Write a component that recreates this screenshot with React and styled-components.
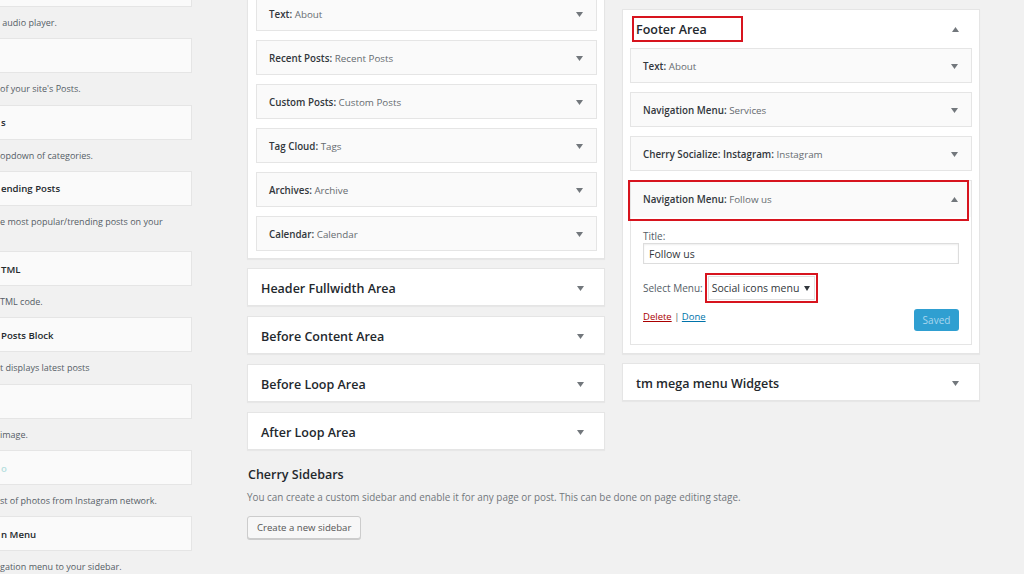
import React from "react";
import styled, { createGlobalStyle } from "styled-components";

const Global = createGlobalStyle`
  html, body { margin: 0; padding: 0; background: #f1f1f1; }
  body { font-family: "Open Sans", "Noto Sans", sans-serif; color: #23282d; overflow: hidden; width: 1024px; height: 574px; }
`;

const Page = styled.div`
  display: flex;
  align-items: flex-start;
  width: 1024px;
  height: 574px;
  overflow: hidden;
`;

const LeftCol = styled.div`
  flex: none;
  width: 200px;
  min-width: 0;
  margin-left: -8px;
  margin-top: -28px;
  display: flex;
  flex-direction: column;
`;

const AvailCard = styled.div`
  height: 35px;
  box-sizing: border-box;
  background: #fafafa;
  border: 1px solid #e5e5e5;
  display: flex;
  align-items: center;
  padding: 1px 0 0 8px;
  font-size: 9.6px;
  font-weight: 600;
  color: ${(p) => (p.$teal ? "#b5dede" : "#23282d")};
  white-space: nowrap;
  overflow: hidden;
`;

const AvailDesc = styled.div`
  margin: 9px 0 8.3px;
  padding-left: 8px;
  font-size: 9px;
  line-height: 14px;
  min-height: ${(p) => (p.$lines || 1) * 14}px;
  color: #555d66;
  white-space: nowrap;
`;

const MidCol = styled.div`
  flex: none;
  width: 358px;
  min-width: 0;
  margin-left: 55px;
  margin-top: -13px;
  display: flex;
  flex-direction: column;
`;

const RightCol = styled.div`
  flex: none;
  width: 358px;
  min-width: 0;
  margin-left: 17px;
  margin-top: 9px;
  display: flex;
  flex-direction: column;
  gap: 9px;
`;

const Panel = styled.div`
  background: #fff;
  border: 1px solid #e5e5e5;
  box-shadow: 0 1px 1px rgba(0, 0, 0, 0.04);
  box-sizing: border-box;
  padding: ${(p) => p.$pad || "0"};
  display: flex;
  flex-direction: column;
  gap: 9px;
  margin-bottom: ${(p) => p.$mb || 0}px;
`;

const Section = styled.div`
  height: 38px;
  box-sizing: border-box;
  background: #fff;
  border: 1px solid #e5e5e5;
  box-shadow: 0 1px 1px rgba(0, 0, 0, 0.04);
  display: flex;
  align-items: center;
  justify-content: space-between;
  padding: 2px 20px 0 13px;
  margin-bottom: ${(p) => p.$mb ?? 10}px;
`;

const SectionTitle = styled.span`
  font-size: 12.5px;
  font-weight: 600;
  color: #23282d;
`;

const PanelHead = styled.div`
  height: 38px;
  display: flex;
  align-items: center;
  justify-content: space-between;
  padding: 0 13px 0 2px;
  margin-bottom: -9px;
`;

const Highlight = styled.span`
  display: inline-flex;
  align-items: center;
  box-sizing: border-box;
  border: 2px solid #d7141e;
  height: 26px;
  width: ${(p) => p.$w || "auto"};
  padding: 1px 2px 0;
`;

const Widget = styled.div`
  position: relative;
  background: #fafafa;
  border: 1px solid #e5e5e5;
  box-sizing: border-box;
`;

const WidgetHead = styled.div`
  height: ${(p) => p.$h || 33}px;
  box-sizing: border-box;
  display: flex;
  align-items: center;
  justify-content: space-between;
  padding: 1px 13px 0 12px;
  font-size: 9.8px;
  white-space: nowrap;
`;

const WName = styled.span`
  font-weight: 600;
  color: #32373c;
`;

const WSub = styled.span`
  color: #666b70;
`;

const HeadOutline = styled.div`
  position: absolute;
  left: -3px;
  right: 2px;
  top: -1px;
  height: 41px;
  border: 2px solid #d7141e;
  box-sizing: border-box;
  pointer-events: none;
`;

const WidgetBody = styled.div`
  background: #fff;
  padding: 12px 12px 13px 12px;
  display: flex;
  flex-direction: column;
`;

const Label = styled.div`
  font-size: 10px;
  line-height: 14px;
  color: #555d66;
`;

const Input = styled.div`
  height: 21px;
  box-sizing: border-box;
  border: 1px solid #ddd;
  box-shadow: inset 0 1px 2px rgba(0, 0, 0, 0.07);
  font-size: 10.5px;
  color: #32373c;
  display: flex;
  align-items: center;
  padding-left: 5px;
`;

const SelectRow = styled.div`
  margin-top: 9px;
  display: flex;
  align-items: center;
  gap: 2px;
  font-size: 10px;
  color: #555d66;
`;

const SelectBox = styled.span`
  display: inline-flex;
  align-items: center;
  gap: 5px;
  height: 24px;
  box-sizing: border-box;
  padding: 0 4px 0 3px;
  border: 1px solid #e2e2e2;
  font-size: 10.5px;
  color: #32373c;
  background: #fff;
`;

const SelectFrame = styled.span`
  display: inline-flex;
  border: 2px solid #d7141e;
  padding: 1px;
  height: 30px;
  box-sizing: border-box;
  align-items: center;
`;

const Actions = styled.div`
  margin-top: 6px;
  display: flex;
  justify-content: space-between;
  align-items: flex-start;
`;

const Links = styled.div`
  font-size: 9.5px;
  line-height: 16px;
  color: #555d66;
`;

const Link = styled.a`
  color: ${(p) => (p.$danger ? "#a00" : "#0073aa")};
  text-decoration: underline;
`;

const SavedBtn = styled.span`
  display: inline-flex;
  align-items: center;
  justify-content: center;
  width: 45px;
  height: 22px;
  border-radius: 3px;
  background: #2f9fd1;
  color: #a9d6ee;
  font-size: 10px;
`;

const SidebarsTitle = styled.div`
  margin-top: 15px;
  font-size: 12.5px;
  line-height: 20px;
  font-weight: 600;
  color: #23282d;
  padding-left: 1px;
`;

const SidebarsDesc = styled.div`
  margin-top: 5px;
  font-size: 9.9px;
  line-height: 14px;
  color: #72777c;
  white-space: nowrap;
`;

const NewBtn = styled.span`
  align-self: flex-start;
  margin-top: 12px;
  height: 23px;
  box-sizing: border-box;
  padding: 0 9px;
  display: inline-flex;
  align-items: center;
  border: 1px solid #ccc;
  border-radius: 3px;
  background: #f7f7f7;
  box-shadow: 0 1px 0 #ccc;
  font-size: 9.6px;
  color: #555;
`;

const Tiny = styled.svg`
  flex: none;
`;

const Arrow = ({ up, color = "#72777c" }) => (
  <Tiny width="7" height="5" viewBox="0 0 7 5">
    {up ? <polygon points="0,5 7,5 3.5,0" fill={color} /> : <polygon points="0,0 7,0 3.5,5" fill={color} />}
  </Tiny>
);

const available = [
  { t: "", d: "\u00a0audio player." },
  { t: "", d: "of your site's Posts." },
  { t: "s", d: "opdown of categories." },
  { t: "ending Posts", d: "e most popular/trending posts on your", lines: 2 },
  { t: "TML", d: "TML code." },
  { t: "Posts Block", d: "t displays latest posts" },
  { t: "", d: "image." },
  { t: "o", d: "st of photos from Instagram network.", teal: true },
  { t: "n Menu", d: "gation menu to your sidebar." },
];

const midWidgets = [
  ["Text", "About"],
  ["Recent Posts", "Recent Posts"],
  ["Custom Posts", "Custom Posts"],
  ["Tag Cloud", "Tags"],
  ["Archives", "Archive"],
  ["Calendar", "Calendar"],
];

const footerWidgets = [
  ["Text", "About"],
  ["Navigation Menu", "Services"],
  ["Cherry Socialize: Instagram", "Instagram"],
];

const sections = ["Header Fullwidth Area", "Before Content Area", "Before Loop Area", "After Loop Area"];

export default function App() {
  return (
    <>
      <Global />
      <Page>
        <LeftCol>
          {available.map((a, i) => (
            <React.Fragment key={i}>
              <AvailCard $teal={a.teal}>{a.t}</AvailCard>
              <AvailDesc $lines={a.lines}>{a.d}</AvailDesc>
            </React.Fragment>
          ))}
        </LeftCol>

        <MidCol>
          <Panel $pad="8px 7px 7px 8px" $mb={9}>
            {midWidgets.map(([n, s]) => (
              <Widget key={n}>
                <WidgetHead>
                  <span>
                    <WName>{n}:</WName> <WSub>{s}</WSub>
                  </span>
                  <Arrow />
                </WidgetHead>
              </Widget>
            ))}
          </Panel>
          {sections.map((s, i) => (
            <Section key={s} $mb={i === sections.length - 1 ? 0 : 10}>
              <SectionTitle>{s}</SectionTitle>
              <Arrow />
            </Section>
          ))}
          <SidebarsTitle>Cherry Sidebars</SidebarsTitle>
          <SidebarsDesc>
            You can create a custom sidebar and enable it for any page or post. This can be done on page editing stage.
          </SidebarsDesc>
          <NewBtn>Create a new sidebar</NewBtn>
        </MidCol>

        <RightCol>
          <Panel $pad="0 7px 8px 7px">
            <PanelHead>
              <Highlight $w="111px">
                <SectionTitle>Footer Area</SectionTitle>
              </Highlight>
              <Arrow up />
            </PanelHead>
            {footerWidgets.map(([n, s]) => (
              <Widget key={n}>
                <WidgetHead>
                  <span>
                    <WName>{n}:</WName> <WSub>{s}</WSub>
                  </span>
                  <Arrow />
                </WidgetHead>
              </Widget>
            ))}
            <Widget>
              <HeadOutline />
              <WidgetHead $h={36}>
                <span>
                  <WName>Navigation Menu:</WName> <WSub>Follow us</WSub>
                </span>
                <Arrow up />
              </WidgetHead>
              <WidgetBody>
                <Label>Title:</Label>
                <Input>Follow us</Input>
                <SelectRow>
                  <span>Select Menu:</span>
                  <SelectFrame>
                    <SelectBox>
                      Social icons menu
                      <Tiny width="6" height="5" viewBox="0 0 6 5">
                        <polygon points="0,0 6,0 3,5" fill="#32373c" />
                      </Tiny>
                    </SelectBox>
                  </SelectFrame>
                </SelectRow>
                <Actions>
                  <Links>
                    <Link $danger>Delete</Link> | <Link>Done</Link>
                  </Links>
                  <SavedBtn>Saved</SavedBtn>
                </Actions>
              </WidgetBody>
            </Widget>
          </Panel>
          <Section $mb={0}>
            <SectionTitle>tm mega menu Widgets</SectionTitle>
            <Arrow />
          </Section>
        </RightCol>
      </Page>
    </>
  );
}
